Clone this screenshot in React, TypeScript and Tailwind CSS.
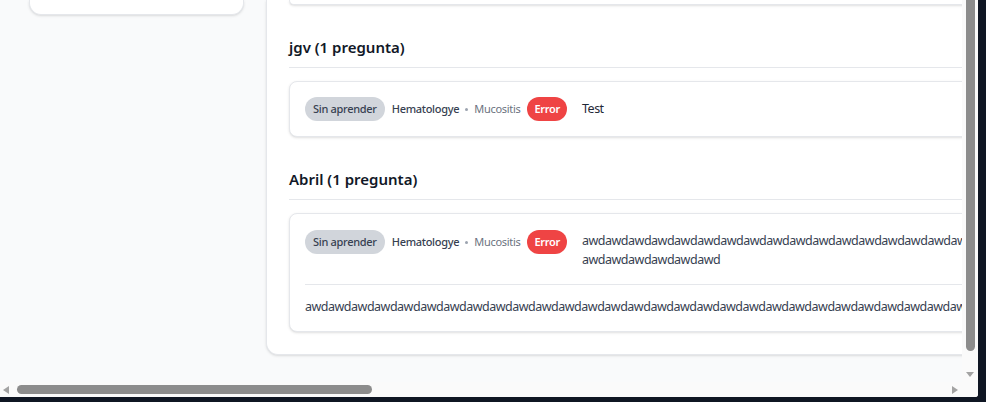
const LONG_1 = "awd".repeat(30) + "\u200B" + "awd".repeat(6);
const LONG_2 = "awd".repeat(60);

function Badges() {
  return (
    <div className="flex shrink-0 items-center whitespace-nowrap text-[11px] tracking-[-0.3px]">
      <span className="rounded-full bg-[#d1d5db] px-[8px] py-[4px] leading-4 font-medium text-[#374151]">
        Sin aprender
      </span>
      <span className="ml-[7px] font-medium text-[#374151]">Hematologye</span>
      <span className="mx-[6px] h-[3px] w-[3px] rounded-full bg-[#9ca3af]" />
      <span className="text-[#6b7280]">Mucositis</span>
      <span className="ml-[7px] rounded-full bg-[#ef4444] px-[7px] py-[4px] leading-4 font-semibold text-white">
        Error
      </span>
    </div>
  );
}

function Section({ title, children }: { title: string; children: React.ReactNode }) {
  return (
    <div className="mt-[30px]">
      <h3 className="border-b border-[#e5e7eb] pb-2 text-[15px] leading-6 font-semibold text-[#111827]">{title}</h3>
      <div className="mt-[13px]">{children}</div>
    </div>
  );
}

export default function App() {
  return (
    <div className="h-[402px] w-[986px] bg-[#0f1623]" style={{ fontFamily: '"Noto Sans", "Open Sans", sans-serif' }}>
      <div className="flex h-[397px] w-[978px] flex-col overflow-hidden rounded-br-[3px] bg-white">
        <div className="flex min-h-0 flex-1">
          {/* viewport */}
          <div className="relative min-w-0 flex-1 overflow-hidden bg-gray-50">
            <div className="flex w-[1400px] items-start pl-[29px]">
              <div className="h-[15px] w-[215px] shrink-0 rounded-b-xl border-x border-b border-[#e5e7eb] bg-white shadow-sm" />
              <div className="ml-[22px] w-[1060px] shrink-0 rounded-b-xl border-x border-b border-[#e5e7eb] bg-white px-[22px] pb-[22px] shadow-sm">
                <div className="h-[5px] rounded-b-lg border-x border-b border-[#e5e7eb] bg-white shadow-sm" />

                <Section title="jgv (1 pregunta)">
                  <div className="flex items-center gap-[15px] rounded-lg border border-[#e5e7eb] bg-white p-[15px] shadow-sm">
                    <Badges />
                    <p className="text-[12.5px] leading-5 tracking-[-0.5px] text-[#1f2937]">Test</p>
                  </div>
                </Section>

                <Section title="Abril (1 pregunta)">
                  <div className="rounded-lg border border-[#e5e7eb] bg-white p-[15px] pb-[14px] shadow-sm">
                    <div className="flex items-start gap-[15px]">
                      <div className="shrink-0 pt-[1px]">
                        <Badges />
                      </div>
                      <p className="w-[705px] shrink-0 break-words pt-[2px] text-[12.5px] leading-[19px] tracking-[-0.5px] text-[#374151]">{LONG_1}</p>
                    </div>
                    <div className="mt-[15px] border-t border-[#e5e7eb] pt-[12px]">
                      <p className="whitespace-nowrap text-[12.5px] leading-5 tracking-[-0.5px] text-[#374151]">{LONG_2}</p>
                    </div>
                  </div>
                </Section>
              </div>
            </div>
          </div>
          {/* vertical scrollbar */}
          <div className="flex w-[16px] shrink-0 flex-col items-center bg-[#fafafa]">
            <div className="h-[351px] w-[9px] rounded-b-full bg-[#8c8c8c]" />
            <div className="mt-[21px] h-0 w-0 border-x-[4px] border-t-[5px] border-x-transparent border-t-[#a3a3a3]" />
          </div>
        </div>
        {/* horizontal scrollbar */}
        <div className="flex h-[15px] shrink-0 items-center bg-[#fafafa]">
          <div className="ml-[3px] h-0 w-0 border-y-[4px] border-r-[6px] border-y-transparent border-r-[#a3a3a3]" />
          <div className="ml-[8px] h-[9px] w-[355px] rounded-full bg-[#8c8c8c]" />
          <div className="ml-auto mr-[20px] h-0 w-0 border-y-[4px] border-l-[6px] border-y-transparent border-l-[#a3a3a3]" />
        </div>
      </div>
    </div>
  );
}
